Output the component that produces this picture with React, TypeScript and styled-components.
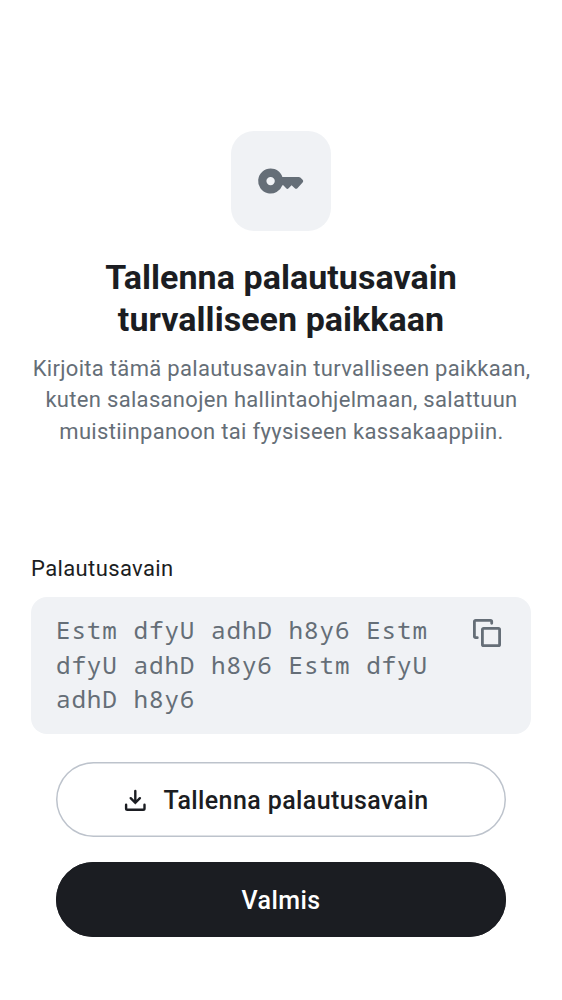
import React from "react";
import styled, { createGlobalStyle } from "styled-components";

const Global = createGlobalStyle`
  * { box-sizing: border-box; }
  body { margin: 0; background: #fff; font-family: Roboto, sans-serif; color: #1b1d22; }
`;
const Screen = styled.main`
  width: 562px; height: 1000px; padding: 131px 31px 0;
  display: flex; flex-direction: column; align-items: stretch;
`;
const Header = styled.header`
  display: flex; flex-direction: column; align-items: center; text-align: center; height: 425px;
`;
const KeyTile = styled.div`
  width: 100px; height: 100px; border-radius: 23px; background: #f0f2f5; color: #656e77;
  display: grid; place-items: center;
`;
const Title = styled.h1`
  margin: 25px 0 0; font-size: 34px; line-height: 42px; font-weight: 700; letter-spacing: 0.05px; white-space: nowrap;
`;
const Description = styled.p`
  margin: 13px -10px 0; font-size: 22px; line-height: 31.3px; letter-spacing: 0.31px; color: #656e77; white-space: nowrap;
  padding-left: 1px;
`;
const Label = styled.div`
  font-size: 22px; line-height: 25px; letter-spacing: 0.38px;
`;
const KeyBox = styled.section`
  display: flex; justify-content: space-between; margin-top: 16px; height: 137px; padding: 16px 29px 0 25px;
  border-radius: 16px; background: #f0f2f5; color: #656e77;
`;
const KeyText = styled.code`
  font-family: "Noto Sans Mono", "Droid Sans Mono", "DejaVu Sans Mono", monospace;
  font-size: 24.3px; line-height: 34.6px; letter-spacing: 0.85px; word-spacing: 0.4px; white-space: nowrap;
`;
const CopyButton = styled.button`
  width: 30px; height: 30px; margin-top: 6px; padding: 0; border: 0; background: none; color: inherit; display: flex;
`;
const Actions = styled.div`
  display: flex; flex-direction: column; gap: 25px; padding: 28.4px 25px 0;
`;
const Action = styled.button<{ $primary?: boolean }>`
  height: 75px; border-radius: 38px; padding: ${p => p.$primary ? "1px 0 0" : "1px 11px 0 0"};
  display: flex; align-items: center; justify-content: center; gap: 16px;
  border: 0; box-shadow: inset 0 0 0 1.5px ${p => p.$primary ? "#1b1d22" : "#bdc3cc"};
  background: ${p => p.$primary ? "#1b1d22" : "#fff"}; color: ${p => p.$primary ? "#fff" : "#1b1d22"};
  font: 500 25px/31px Roboto, sans-serif; letter-spacing: 0.4px;
`;

export default function App() {
  return <><Global /><Screen>
    <Header>
      <KeyTile><svg width="50" height="50" viewBox="0 0 50 50" fill="currentColor"><path fillRule="evenodd" d="M14.6 12.6c5.5 0 10.1 3.4 11.8 8.3h16.4c.6 0 1.1.2 1.5.6l2.3 2.3c.8.8.8 1.8 0 2.6l-5.2 5.8c-.8.8-1.8.9-2.6.1l-3.2-3-3 3c-.8.8-1.7.8-2.4 0l-2.9-3h-.9A12.5 12.5 0 1 1 14.6 12.6Zm0 8.3a4.2 4.2 0 1 0 0 8.4 4.2 4.2 0 0 0 0-8.4Z"/></svg></KeyTile>
      <Title>Tallenna palautusavain<br />turvalliseen paikkaan</Title>
      <Description>Kirjoita tämä palautusavain turvalliseen paikkaan,<br />kuten salasanojen hallintaohjelmaan, salattuun<br />muistiinpanoon tai fyysiseen kassakaappiin.</Description>
    </Header>
    <Label>Palautusavain</Label>
    <KeyBox>
      <KeyText>Estm dfyU adhD h8y6 Estm<br />dfyU adhD h8y6 Estm dfyU<br />adhD h8y6</KeyText>
      <CopyButton aria-label="Kopioi"><svg width="30" height="30" viewBox="0 0 30 30" fill="none" stroke="currentColor" strokeWidth="2.8" strokeLinecap="round"><rect x="10.4" y="9.4" width="17.2" height="17.2" rx="1.2"/><path d="M5.3 18.7H3.6a1.2 1.2 0 0 1-1.2-1.2V2.6a1.2 1.2 0 0 1 1.2-1.2h14.9a1.2 1.2 0 0 1 1.2 1.2v1.7"/></svg></CopyButton>
    </KeyBox>
    <Actions>
      <Action><svg width="25" height="25" viewBox="0 0 25 25" fill="none" stroke="currentColor" strokeWidth="2.4" strokeLinecap="round"><path d="M13.3 3v11.8M8.7 10.2l4.6 4.6 4.6-4.6"/><path d="M4.1 16.8v3.6a1.3 1.3 0 0 0 1.3 1.3h15.8a1.3 1.3 0 0 0 1.3-1.3v-3.6"/></svg>Tallenna palautusavain</Action>
      <Action $primary>Valmis</Action>
    </Actions>
  </Screen></>;
}
